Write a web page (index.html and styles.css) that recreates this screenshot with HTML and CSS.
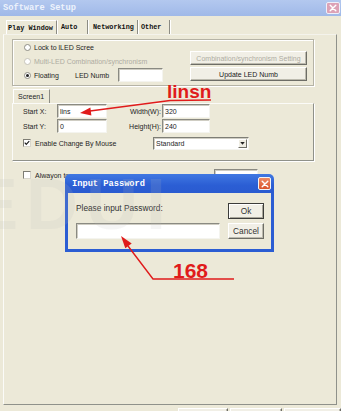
FILE: index.html
```html
<!DOCTYPE html>
<html>
<head>
<meta charset="utf-8">
<title>Software Setup</title>
<link rel="stylesheet" href="styles.css">
</head>
<body>
<div class="window">
  <div class="titlebar">
    <span class="title">Software Setup</span>
    <span class="close-btn inactive"><svg viewBox="0 0 10 10" width="8" height="8"><path d="M1.5 1.5 L8.5 8.5 M8.5 1.5 L1.5 8.5" stroke="#fff" stroke-width="1.8" stroke-linecap="round"/></svg></span>
  </div>
  <div class="tabs">
    <div class="tab active t1">Play Window</div>
    <div class="tab t2">Auto</div>
    <div class="tab t3">Networking</div>
    <div class="tab t4">Other</div>
  </div>
  <div class="panel">
    <div class="group">
      <div class="group-left">
        <div class="opt"><span class="radio"></span><span>Lock to lLED Scree</span></div>
        <div class="opt disabled"><span class="radio"></span><span>Multi-LED Combination/synchronism</span></div>
        <div class="opt"><span class="radio checked"></span><span class="lbl-float">Floating</span><span class="lbl-numb">LED Numb</span><span class="input led-numb"></span></div>
      </div>
      <div class="group-right">
        <div class="btn disabled">Combination/synchronism Setting</div>
        <div class="btn">Update LED Numb</div>
      </div>
    </div>
    <div class="subtabs"><div class="subtab">Screen1</div></div>
    <div class="subpanel">
      <div class="field-row">
        <span class="lbl1">Start X:</span><span class="input w50">lins</span>
        <span class="lbl2">Width(W):</span><span class="input w48">320</span>
      </div>
      <div class="field-row second">
        <span class="lbl1">Start Y:</span><span class="input w50">0</span>
        <span class="lbl2">Height(H):</span><span class="input w48">240</span>
      </div>
      <div class="check-row">
        <span class="checkbox"><svg viewBox="0 0 8 8" width="6" height="6"><path d="M1 3.6 L3 5.8 L7 1.6" fill="none" stroke="#1a1a1a" stroke-width="1.5"/></svg></span>
        <span class="check-label">Enable Change By Mouse</span>
        <span class="select"><span class="select-text">Standard</span><span class="select-btn"><svg viewBox="0 0 6 4" width="5" height="3"><path d="M0 0 H6 L3 3.5 Z" fill="#222"/></svg></span></span>
      </div>
    </div>
    <div class="always-row">
      <span class="checkbox"></span>
      <span class="always-label">Alwayon top</span>
      <span class="input always-input"></span>
    </div>
  </div>
  <div class="footer">
    <div class="btn fbtn b1"></div>
    <div class="btn fbtn b2"></div>
    <div class="btn fbtn b3"></div>
  </div>

  <div class="dialog">
    <div class="dlg-title">
      <span class="dlg-title-text">Input Password</span>
      <span class="close-btn active"><svg viewBox="0 0 10 10" width="8" height="8"><path d="M1.5 1.5 L8.5 8.5 M8.5 1.5 L1.5 8.5" stroke="#fff" stroke-width="1.8" stroke-linecap="round"/></svg></span>
    </div>
    <div class="dlg-body">
      <div class="dlg-left">
        <div class="dlg-label">Please input Password:</div>
        <div class="input dlg-input"></div>
      </div>
      <div class="dlg-buttons">
        <div class="btn dbtn default">Ok</div>
        <div class="btn dbtn">Cancel</div>
      </div>
    </div>
  </div>

  <div class="watermark">EDUI</div>

  <svg class="annot-lines" viewBox="0 0 341 411" width="341" height="411">
    <polyline points="211,100 170,100.5 90,111" fill="none" stroke="#e01b1b" stroke-width="1.4"/>
    <polygon points="80,113 91.4,115.5 90.4,107.6" fill="#e01b1b"/>
    <polyline points="234,279 153,279 128,246" fill="none" stroke="#e01b1b" stroke-width="1.4"/>
    <polygon points="121,236 131.7,243.5 125.3,248.2" fill="#e01b1b"/>
  </svg>
  <div class="annot annot-linsn">linsn</div>
  <div class="annot annot-168">168</div>
</div>
</body>
</html>
```

FILE: styles.css
```css
* { box-sizing: border-box; }
html, body { margin: 0; padding: 0; }
body {
  width: 341px;
  height: 411px;
  overflow: hidden;
  background: #ece9d8;
  font-family: "Liberation Sans", Arial, sans-serif;
  font-size: 7px;
  color: #1e1e1e;
}
.window {
  position: relative;
  width: 341px;
  height: 411px;
  overflow: hidden;
  background: #ece9d8;
}

/* title bar */
.titlebar {
  height: 16px;
  display: flex;
  align-items: center;
  justify-content: space-between;
  padding: 0 1px 0 3px;
  background: linear-gradient(#b3c8ef, #a0b9e8);
}
.title {
  font-family: "Liberation Mono", monospace;
  font-weight: bold;
  font-size: 8.7px;
  color: #eef3fc;
}
.close-btn {
  display: flex;
  align-items: center;
  justify-content: center;
  border-radius: 2px;
}
.close-btn.inactive {
  width: 14px;
  height: 12px;
  background: #dca2b6;
  border: 1px solid #eef0fa;
}
.close-btn.active {
  width: 13px;
  height: 13px;
  background: linear-gradient(#ee8a64, #d9542c);
  border: 1px solid #f4f4f4;
}

/* tabs */
.tabs {
  display: flex;
  margin: 4px 0 0 6px;
  height: 14px;
}
.tab {
  height: 14px;
  display: flex;
  align-items: center;
  font-family: "Liberation Mono", monospace;
  font-weight: bold;
  font-size: 6.8px;
  color: #111;
  border-right: 1px solid #8c8c84;
  box-shadow: 1px 0 0 #fff;
  padding-left: 4px;
}
.tab.active { border-left: 1px solid #fff; border-top: 1px solid #fff; padding-left: 1px; }
.t1 { width: 51px; }
.t2 { width: 31px; }
.t3 { width: 50px; padding-left: 5px; }
.t4 { width: 32px; padding-left: 3px; }

/* main panel */
.panel {
  margin-left: 3px;
  width: 334px;
  height: 371px;
  border: 1px solid #8f918a;
  border-left-color: #fbfbf8;
  border-top-color: #f4f3ec;
}
.group {
  margin: 4px 0 0 8px;
  width: 302px;
  height: 47px;
  border: 1px solid #b5b3a6;
  box-shadow: inset 1px 1px 0 #fff, 1px 1px 0 #fff;
  display: flex;
}
.group-left { padding-left: 11px; }
.opt {
  height: 14px;
  display: flex;
  align-items: center;
}
.opt.disabled { color: #aeaca2; }
.radio {
  width: 7px;
  height: 7px;
  border-radius: 50%;
  background: #fff;
  border: 1px solid #8e8d84;
  margin-right: 3px;
  display: flex;
  align-items: center;
  justify-content: center;
}
.opt.disabled .radio { border-color: #c6c4ba; }
.radio.checked::after {
  content: "";
  width: 3px;
  height: 3px;
  border-radius: 50%;
  background: #222;
}
.lbl-float { width: 41px; }
.lbl-numb { width: 43px; }
.led-numb { width: 45px; height: 14px; }

.group-right {
  margin-left: auto;
  margin-right: 6px;
  padding-top: 11px;
  display: flex;
  flex-direction: column;
  gap: 2px;
}
.group-right .btn { width: 117px; height: 14px; }

.btn {
  display: flex;
  align-items: center;
  justify-content: center;
  background: #f1efe6;
  border: 1px solid;
  border-color: #fff #6d6d66 #6d6d66 #fff;
  box-shadow: inset -1px -1px 0 #bcbaae;
  color: #222;
}
.btn.disabled { color: #aeaca2; }

/* screen sub tab */
.subtabs { margin: 3px 0 0 9px; height: 14px; display: flex; }
.subtab {
  width: 37px;
  height: 14px;
  display: flex;
  align-items: center;
  padding-left: 4px;
  border-left: 1px solid #fff;
  border-top: 1px solid #fff;
  border-right: 1px solid #8c8c84;
}
.subpanel {
  margin-left: 8px;
  width: 302px;
  height: 58px;
  border: 1px solid #8f918a;
  border-left-color: #fbfbf8;
  border-top-color: #fbfbf8;
  box-shadow: 1px 1px 0 #fff;
  padding-left: 10px;
}
.field-row {
  height: 14px;
  display: flex;
  align-items: center;
}
.field-row.second { margin-top: 1px; }
.lbl1 { width: 34px; }
.lbl2 { width: 55px; text-align: right; padding-right: 1px; }
.input {
  display: flex;
  align-items: center;
  height: 14px;
  background: #fff;
  border: 1px solid;
  border-color: #8a8a82 #f4f4ef #f4f4ef #8a8a82;
  box-shadow: inset 1px 1px 0 #cfcdc3;
  padding-left: 2px;
  color: #222;
}
.w50 { width: 50px; }
.w48 { width: 48px; }

.check-row {
  margin-top: 3px;
  height: 14px;
  display: flex;
  align-items: center;
}
.checkbox {
  width: 8px;
  height: 8px;
  background: #fff;
  border: 1px solid #7e7d74;
  border-right-color: #d8d6cc;
  border-bottom-color: #d8d6cc;
  display: flex;
  align-items: center;
  justify-content: center;
}
.check-label { margin-left: 4px; width: 118px; }
.select {
  width: 96px;
  height: 13px;
  display: flex;
  align-items: center;
  background: #fff;
  border: 1px solid;
  border-color: #7e7e76 #f4f4ef #f4f4ef #7e7e76;
  box-shadow: inset 1px 1px 0 #cfcdc3;
  padding-left: 2px;
}
.select-btn {
  margin-left: auto;
  margin-right: 1px;
  width: 9px;
  height: 9px;
  display: flex;
  align-items: center;
  justify-content: center;
  background: #efede3;
  border: 1px solid;
  border-color: #fff #6d6d66 #6d6d66 #fff;
}

.always-row {
  margin-top: 7px;
  height: 14px;
  padding-left: 19px;
  display: flex;
  align-items: center;
}
.always-label { margin-left: 4px; width: 179px; }
.always-input { width: 44px; height: 13px; align-self: flex-end; }

.footer {
  margin: 3px 0 0 178px;
  display: flex;
  gap: 2px;
}
.fbtn { height: 14px; }
.b1 { width: 50px; }
.b2 { width: 52px; }
.b3 { width: 57px; }

/* dialog */
.dialog {
  position: absolute;
  left: 65px;
  top: 174px;
  width: 209px;
  height: 78px;
}
.dlg-title {
  height: 19px;
  display: flex;
  align-items: center;
  justify-content: space-between;
  padding: 0 3px 0 7px;
  border-radius: 5px 5px 0 0;
  background: linear-gradient(#4078e2, #2b5ed4 60%, #2a5bd0);
}
.dlg-title-text {
  font-family: "Liberation Mono", monospace;
  font-weight: bold;
  font-size: 8.7px;
  color: #fff;
}
.dlg-body {
  height: 59px;
  display: flex;
  background: #ece9d8;
  border: 3px solid #2b5dd3;
  border-top: 0;
  padding: 9px 0 0 8px;
  font-size: 8.3px;
  color: #333;
}
.dlg-label { height: 12px; display: flex; align-items: center; }
.dlg-input { margin-top: 9px; width: 144px; height: 16px; }
.dlg-buttons {
  margin-left: 8px;
  padding-top: 1px;
  display: flex;
  flex-direction: column;
  gap: 4px;
}
.dbtn { width: 36px; height: 16px; color: #333; }
.dbtn.default {
  border: 1px solid #3c3c3a;
  box-shadow: inset 1px 1px 0 #fff, inset -1px -1px 0 #a8a69a;
}

/* watermark & annotations */
.watermark {
  position: absolute;
  left: -30px;
  top: 168px;
  font-family: "Liberation Sans", Arial, sans-serif;
  font-weight: bold;
  font-size: 72px;
  line-height: 1;
  letter-spacing: 8px;
  color: rgba(185, 185, 185, 0.15);
  pointer-events: none;
}
.annot-lines {
  position: absolute;
  left: 0;
  top: 0;
  pointer-events: none;
}
.annot {
  position: absolute;
  font-family: "Liberation Sans", Arial, sans-serif;
  font-weight: bold;
  color: #e01b1b;
  line-height: 1;
}
.annot-linsn { left: 167px; top: 82px; font-size: 19px; }
.annot-168 { left: 173px; top: 260px; font-size: 21px; }
```
